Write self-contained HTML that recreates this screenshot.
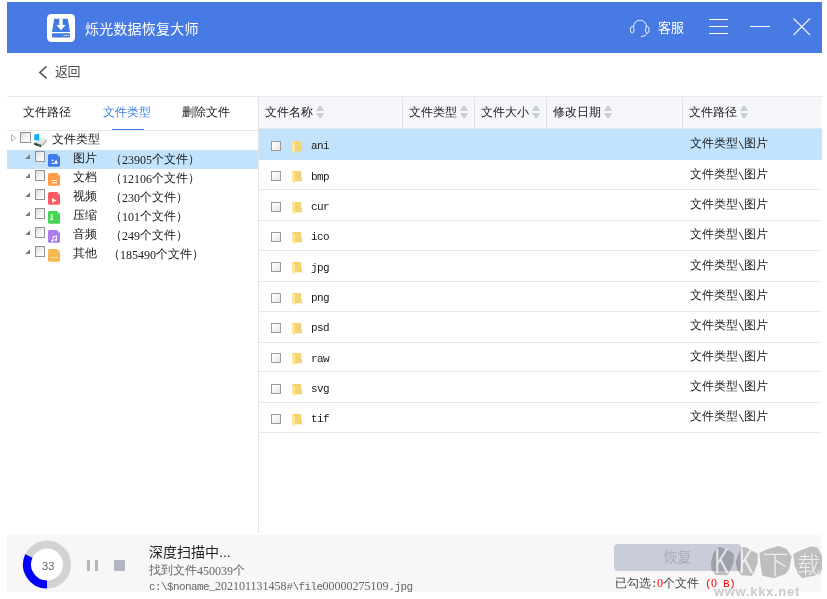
<!DOCTYPE html>
<html lang="zh-CN">
<head>
<meta charset="utf-8">
<title>烁光数据恢复大师</title>
<style>
html,body{margin:0;padding:0;background:#fff;}
body{width:827px;height:599px;position:relative;overflow:hidden;
  font-family:"Liberation Sans","Noto Sans CJK SC",sans-serif;font-size:12px;color:#222;}
.abs{position:absolute;}
.t,.yh{will-change:transform;}
.t{position:absolute;white-space:nowrap;line-height:14px;height:14px;font-size:12px;
  font-family:"Liberation Mono","WenQuanYi Zen Hei","Noto Sans CJK SC",sans-serif;color:#1a1a1a;}
.l{font-family:"Liberation Mono",monospace;font-size:11px;letter-spacing:-0.6px;position:relative;top:1px;}
.yh{font-family:"Liberation Sans","Noto Sans CJK SC",sans-serif;}
#titlebar{left:7px;top:2px;width:815px;height:51px;background:#477be3;}
.cb{position:absolute;width:9px;height:9px;border:1px solid #939393;background:linear-gradient(135deg,#dcdcdc 0%,#f6f6f6 60%,#ffffff 100%);}
.hline{position:absolute;height:1px;background:#e9e9e9;}
.vline{position:absolute;width:1px;background:#e4e4e4;}
.sort{position:absolute;width:9px;height:14px;}
.sort:before{content:"";position:absolute;left:0;top:0;border:4.5px solid transparent;border-top:0;border-bottom:6px solid #c9ccd2;}
.sort:after{content:"";position:absolute;left:0;top:8px;border:4.5px solid transparent;border-bottom:0;border-top:6px solid #c9ccd2;}
.rowsel{position:absolute;background:#c3e3fd;}
.d{font-family:"Liberation Serif",serif;font-size:12px;position:relative;top:1px;}
.l2{top:2px;}
.l0{top:0;}
.cb2{width:8px;height:8px;border-color:#9b9b9b;background:linear-gradient(135deg,#ffffff 0%,#f4f4f4 50%,#e6e6e6 100%);}
.cbc{width:8px;}
</style>
</head>
<body>

<!-- title bar -->
<div id="titlebar" class="abs"></div>
<svg class="abs" style="left:47px;top:14px" width="28" height="28" viewBox="0 0 28 28">
  <rect x="0" y="0" width="28" height="28" rx="4.5" fill="#fff"/>
  <path d="M7.2 4.8 H20.8 L23 18 H5 Z" fill="#3f7be0"/>
  <rect x="5" y="19.3" width="18" height="4.2" rx="0.8" fill="#3f7be0"/>
  <path d="M12.3 4.8 H15.7 V11 H18.6 L14 16.2 L9.4 11 H12.3 Z" fill="#fff"/>
  <rect x="16.6" y="21" width="1.2" height="1" fill="#fff"/>
  <rect x="18.6" y="21" width="1.2" height="1" fill="#fff"/>
  <rect x="20.6" y="21" width="1.2" height="1" fill="#fff"/>
</svg>
<div class="abs yh" style="left:85px;top:18px;font-size:14px;line-height:22px;color:#fff;font-weight:400;letter-spacing:0.2px;white-space:nowrap;">烁光数据恢复大师</div>

<!-- headset -->
<svg class="abs" style="left:628px;top:18px" width="24" height="22" viewBox="0 0 24 22" fill="none" stroke="#fff" stroke-opacity="0.9" stroke-width="1">
  <path d="M5.5 9 A6.5 6.8 0 0 1 18.5 9"/>
  <ellipse cx="4.2" cy="11.8" rx="1.8" ry="3.3"/>
  <ellipse cx="19.3" cy="11.8" rx="1.8" ry="3.3"/>
  <path d="M19.3 15.1 Q18 18.4 12.8 18.8"/>
</svg>
<div class="abs yh" style="left:658px;top:17px;font-size:13px;line-height:22px;color:#fff;white-space:nowrap;">客服</div>
<!-- menu -->
<div class="abs" style="left:709px;top:19px;width:19px;height:1px;background:#fff;"></div>
<div class="abs" style="left:709px;top:26px;width:19px;height:1px;background:#fff;"></div>
<div class="abs" style="left:709px;top:33px;width:19px;height:1px;background:#fff;"></div>
<!-- minimize -->
<div class="abs" style="left:750px;top:26px;width:20px;height:1px;background:#fff;"></div>
<!-- close -->
<svg class="abs" style="left:792px;top:17px" width="20" height="20" viewBox="0 0 20 20" stroke="#fff" stroke-opacity="0.92" stroke-width="1.1" fill="none">
  <path d="M1.5 1.5 L18 18 M18 1.5 L1.5 18"/>
</svg>

<!-- back -->
<svg class="abs" style="left:38px;top:65px" width="11" height="15" viewBox="0 0 11 15" fill="none" stroke="#555" stroke-width="1.5">
  <path d="M8.6 1.4 L1.8 7.4 L8.6 13.4"/>
</svg>
<div class="abs yh" style="left:55px;top:62px;font-size:13px;line-height:20px;color:#505050;white-space:nowrap;letter-spacing:-0.4px;">返回</div>

<div class="hline" style="left:7px;top:96px;width:815px;"></div>

<!-- left tabs -->
<div class="t" style="left:23px;top:106px;">文件路径</div>
<div class="t" style="left:103px;top:106px;color:#3f7fe8;">文件类型</div>
<div class="t" style="left:182px;top:106px;">删除文件</div>
<div class="hline" style="left:7px;top:130px;width:251px;"></div>
<div class="abs" style="left:112px;top:129px;width:32px;height:1px;background:#3f7fe8;"></div>

<!-- tree -->
<div id="tree">
<div class="rowsel" style="left:7px;top:150px;width:251px;height:19px;"></div>
<svg class="abs" style="left:11px;top:134px" width="6" height="8" viewBox="0 0 6 8"><path d="M0.5 0.8 L4.6 4 L0.5 7.2 Z" fill="#fff" stroke="#b4b4b4" stroke-width="1"/></svg>
<div class="cb" style="left:20px;top:132px;"></div>
<svg class="abs" style="left:33px;top:133px" width="15" height="15" viewBox="0 0 15 15">
  <path d="M1.2 9.6 L7.6 4.6 L14 6.2 L8.2 11.8 Z" fill="#e3e5e7"/>
  <path d="M1.2 9.6 L8.2 11.8 V14.2 L1.2 12 Z" fill="#3c3f42"/>
  <path d="M8.2 11.8 L14 6.2 V8.4 L8.2 14.2 Z" fill="#b7babd"/>
  <path d="M5.4 11.6 L7 12.1 V13 L5.4 12.5 Z" fill="#39c24a"/>
  <path d="M1.2 1.6 L6.2 0.8 V7.6 L1.2 7.2 Z" fill="#0ab4f2"/>
</svg>
<div class="t" style="left:52px;top:133px;">文件类型</div>
<svg class="abs" style="left:24px;top:154px" width="7" height="6" viewBox="0 0 7 6"><path d="M6 0.2 V5 H1.2 Z" fill="#7a7a7a"/></svg>
<div class="cb cbc" style="left:35px;top:151px;"></div>
<svg class="abs" style="left:48px;top:154px" width="12" height="13" viewBox="0 0 12 13"><path d="M1.6 0 H9.4 L12 2.6 V11.2 Q12 12.8 10.4 12.8 H1.6 Q0 12.8 0 11.2 V1.6 Q0 0 1.6 0 Z" fill="#4279e8"/><path d="M9.4 0 L12 2.6 H10.2 Q9.4 2.6 9.4 1.8 Z" fill="#fff" fill-opacity="0.55"/><g transform="translate(0,1)"><path d="M2.8 8.8 L5 7.4 L6.2 8 L8.2 4.6 L9.8 8.8 Z" fill="#fff"/><rect x="3.6" y="4.4" width="1.7" height="1.7" rx="0.6" fill="#fff"/></g></svg>
<div class="t" style="left:73px;top:152px;">图片</div>
<div class="t" style="left:110px;top:152px;">（<span class="d">23905</span>个文件）</div>
<svg class="abs" style="left:24px;top:173px" width="7" height="6" viewBox="0 0 7 6"><path d="M6 0.2 V5 H1.2 Z" fill="#7a7a7a"/></svg>
<div class="cb cbc" style="left:35px;top:170px;"></div>
<svg class="abs" style="left:48px;top:173px" width="12" height="13" viewBox="0 0 12 13"><path d="M1.6 0 H9.4 L12 2.6 V11.2 Q12 12.8 10.4 12.8 H1.6 Q0 12.8 0 11.2 V1.6 Q0 0 1.6 0 Z" fill="#ff9b40"/><path d="M9.4 0 L12 2.6 H10.2 Q9.4 2.6 9.4 1.8 Z" fill="#fff" fill-opacity="0.55"/><g transform="translate(0,1)"><rect x="3.6" y="6" width="5.4" height="1" fill="#fff"/><rect x="3.6" y="8.3" width="5.4" height="1" fill="#fff"/></g></svg>
<div class="t" style="left:73px;top:171px;">文档</div>
<div class="t" style="left:110px;top:171px;">（<span class="d">12106</span>个文件）</div>
<svg class="abs" style="left:24px;top:192px" width="7" height="6" viewBox="0 0 7 6"><path d="M6 0.2 V5 H1.2 Z" fill="#7a7a7a"/></svg>
<div class="cb cbc" style="left:35px;top:189px;"></div>
<svg class="abs" style="left:48px;top:192px" width="12" height="13" viewBox="0 0 12 13"><path d="M1.6 0 H9.4 L12 2.6 V11.2 Q12 12.8 10.4 12.8 H1.6 Q0 12.8 0 11.2 V1.6 Q0 0 1.6 0 Z" fill="#fb5c63"/><path d="M9.4 0 L12 2.6 H10.2 Q9.4 2.6 9.4 1.8 Z" fill="#fff" fill-opacity="0.55"/><g transform="translate(0,1)"><path d="M4 5 L8.4 7.4 L4 9.8 Z" fill="#fff"/></g></svg>
<div class="t" style="left:73px;top:190px;">视频</div>
<div class="t" style="left:110px;top:190px;">（<span class="d">230</span>个文件）</div>
<svg class="abs" style="left:24px;top:211px" width="7" height="6" viewBox="0 0 7 6"><path d="M6 0.2 V5 H1.2 Z" fill="#7a7a7a"/></svg>
<div class="cb cbc" style="left:35px;top:208px;"></div>
<svg class="abs" style="left:48px;top:211px" width="12" height="13" viewBox="0 0 12 13"><path d="M1.6 0 H9.4 L12 2.6 V11.2 Q12 12.8 10.4 12.8 H1.6 Q0 12.8 0 11.2 V1.6 Q0 0 1.6 0 Z" fill="#43d654"/><path d="M9.4 0 L12 2.6 H10.2 Q9.4 2.6 9.4 1.8 Z" fill="#fff" fill-opacity="0.55"/><g transform="translate(0,1)"><path d="M2.6 2.2 H4.8 V3.6 H2.6 Z M3 4.2 H5 V5.6 H3 Z M2.4 6.2 H4.8 V8.2 H2.4 Z" fill="#fff"/></g></svg>
<div class="t" style="left:73px;top:209px;">压缩</div>
<div class="t" style="left:110px;top:209px;">（<span class="d">101</span>个文件）</div>
<svg class="abs" style="left:24px;top:230px" width="7" height="6" viewBox="0 0 7 6"><path d="M6 0.2 V5 H1.2 Z" fill="#7a7a7a"/></svg>
<div class="cb cbc" style="left:35px;top:227px;"></div>
<svg class="abs" style="left:48px;top:230px" width="12" height="13" viewBox="0 0 12 13"><path d="M1.6 0 H9.4 L12 2.6 V11.2 Q12 12.8 10.4 12.8 H1.6 Q0 12.8 0 11.2 V1.6 Q0 0 1.6 0 Z" fill="#ac7bee"/><path d="M9.4 0 L12 2.6 H10.2 Q9.4 2.6 9.4 1.8 Z" fill="#fff" fill-opacity="0.55"/><g transform="translate(0,1)"><path d="M4.6 5.4 L9 4.4 V9 A1.1 1.1 0 1 1 8.1 7.9 V5.8 L5.5 6.4 V10 A1.1 1.1 0 1 1 4.6 8.9 Z" fill="#fff"/></g></svg>
<div class="t" style="left:73px;top:228px;">音频</div>
<div class="t" style="left:110px;top:228px;">（<span class="d">249</span>个文件）</div>
<svg class="abs" style="left:24px;top:249px" width="7" height="6" viewBox="0 0 7 6"><path d="M6 0.2 V5 H1.2 Z" fill="#7a7a7a"/></svg>
<div class="cb cbc" style="left:35px;top:246px;"></div>
<svg class="abs" style="left:48px;top:249px" width="12" height="13" viewBox="0 0 12 13"><path d="M1.6 0 H9.4 L12 2.6 V11.2 Q12 12.8 10.4 12.8 H1.6 Q0 12.8 0 11.2 V1.6 Q0 0 1.6 0 Z" fill="#f4ba50"/><path d="M9.4 0 L12 2.6 H10.2 Q9.4 2.6 9.4 1.8 Z" fill="#fff" fill-opacity="0.55"/><g transform="translate(0,1)"><rect x="3.4" y="7" width="1.4" height="1" fill="#fff" fill-opacity=".8"/><rect x="5.5" y="7" width="1.4" height="1" fill="#fff" fill-opacity=".8"/><rect x="7.6" y="7" width="1.4" height="1" fill="#fff" fill-opacity=".8"/></g></svg>
<div class="t" style="left:73px;top:247px;">其他</div>
<div class="t" style="left:108px;top:247px;">（<span class="d">185490</span>个文件）</div>
</div><!--/tree-->

<!-- right table -->
<div id="table">
<div class="vline" style="left:258px;top:97px;height:436px;"></div>
<div class="abs" style="left:259px;top:97px;width:563px;height:32px;background:#f5f7fa;"></div>
<div class="hline" style="left:259px;top:128px;width:563px;background:#e6e8ec;"></div>
<div class="vline" style="left:402px;top:97px;height:31px;background:#dfe1e6;"></div>
<div class="vline" style="left:474px;top:97px;height:31px;background:#dfe1e6;"></div>
<div class="vline" style="left:546px;top:97px;height:31px;background:#dfe1e6;"></div>
<div class="vline" style="left:682px;top:97px;height:31px;background:#dfe1e6;"></div>
<div class="t" style="left:265px;top:106px;">文件名称</div>
<div class="sort" style="left:316px;top:105px;"></div>
<div class="t" style="left:409px;top:106px;">文件类型</div>
<div class="sort" style="left:460px;top:105px;"></div>
<div class="t" style="left:481px;top:106px;">文件大小</div>
<div class="sort" style="left:532px;top:105px;"></div>
<div class="t" style="left:553px;top:106px;">修改日期</div>
<div class="sort" style="left:604px;top:105px;"></div>
<div class="t" style="left:689px;top:106px;">文件路径</div>
<div class="sort" style="left:740px;top:105px;"></div>
<div class="rowsel" style="left:259px;top:129px;width:563px;height:31px;"></div>
<div class="cb cb2" style="left:271px;top:141px;"></div>
<svg class="abs" style="left:291px;top:141px" width="12" height="13" viewBox="0 0 12 13"><rect x="1" y="0" width="9.2" height="10.3" fill="#f5d36f"/><rect x="10" y="6" width="1" height="4.3" fill="#f5d36f"/><path d="M1 0 L4 2 V12.4 L1 10.4 Z" fill="#fde79b"/></svg>
<div class="t" style="left:311px;top:137px;"><span class="l l2">ani</span></div>
<div class="t" style="left:690px;top:137px;">文件类型<span class="l l2">\</span>图片</div>
<div class="hline" style="left:259px;top:189px;width:563px;"></div>
<div class="cb cb2" style="left:271px;top:171px;"></div>
<svg class="abs" style="left:291px;top:171px" width="12" height="13" viewBox="0 0 12 13"><rect x="1" y="0" width="9.2" height="10.3" fill="#f5d36f"/><rect x="10" y="6" width="1" height="4.3" fill="#f5d36f"/><path d="M1 0 L4 2 V12.4 L1 10.4 Z" fill="#fde79b"/></svg>
<div class="t" style="left:311px;top:168px;"><span class="l l2">bmp</span></div>
<div class="t" style="left:690px;top:168px;">文件类型<span class="l l2">\</span>图片</div>
<div class="hline" style="left:259px;top:220px;width:563px;"></div>
<div class="cb cb2" style="left:271px;top:202px;"></div>
<svg class="abs" style="left:291px;top:202px" width="12" height="13" viewBox="0 0 12 13"><rect x="1" y="0" width="9.2" height="10.3" fill="#f5d36f"/><rect x="10" y="6" width="1" height="4.3" fill="#f5d36f"/><path d="M1 0 L4 2 V12.4 L1 10.4 Z" fill="#fde79b"/></svg>
<div class="t" style="left:311px;top:198px;"><span class="l l2">cur</span></div>
<div class="t" style="left:690px;top:198px;">文件类型<span class="l l2">\</span>图片</div>
<div class="hline" style="left:259px;top:250px;width:563px;"></div>
<div class="cb cb2" style="left:271px;top:232px;"></div>
<svg class="abs" style="left:291px;top:232px" width="12" height="13" viewBox="0 0 12 13"><rect x="1" y="0" width="9.2" height="10.3" fill="#f5d36f"/><rect x="10" y="6" width="1" height="4.3" fill="#f5d36f"/><path d="M1 0 L4 2 V12.4 L1 10.4 Z" fill="#fde79b"/></svg>
<div class="t" style="left:311px;top:228px;"><span class="l l2">ico</span></div>
<div class="t" style="left:690px;top:228px;">文件类型<span class="l l2">\</span>图片</div>
<div class="hline" style="left:259px;top:281px;width:563px;"></div>
<div class="cb cb2" style="left:271px;top:262px;"></div>
<svg class="abs" style="left:291px;top:262px" width="12" height="13" viewBox="0 0 12 13"><rect x="1" y="0" width="9.2" height="10.3" fill="#f5d36f"/><rect x="10" y="6" width="1" height="4.3" fill="#f5d36f"/><path d="M1 0 L4 2 V12.4 L1 10.4 Z" fill="#fde79b"/></svg>
<div class="t" style="left:311px;top:259px;"><span class="l l2">jpg</span></div>
<div class="t" style="left:690px;top:259px;">文件类型<span class="l l2">\</span>图片</div>
<div class="hline" style="left:259px;top:311px;width:563px;"></div>
<div class="cb cb2" style="left:271px;top:293px;"></div>
<svg class="abs" style="left:291px;top:293px" width="12" height="13" viewBox="0 0 12 13"><rect x="1" y="0" width="9.2" height="10.3" fill="#f5d36f"/><rect x="10" y="6" width="1" height="4.3" fill="#f5d36f"/><path d="M1 0 L4 2 V12.4 L1 10.4 Z" fill="#fde79b"/></svg>
<div class="t" style="left:311px;top:289px;"><span class="l l2">png</span></div>
<div class="t" style="left:690px;top:289px;">文件类型<span class="l l2">\</span>图片</div>
<div class="hline" style="left:259px;top:342px;width:563px;"></div>
<div class="cb cb2" style="left:271px;top:323px;"></div>
<svg class="abs" style="left:291px;top:323px" width="12" height="13" viewBox="0 0 12 13"><rect x="1" y="0" width="9.2" height="10.3" fill="#f5d36f"/><rect x="10" y="6" width="1" height="4.3" fill="#f5d36f"/><path d="M1 0 L4 2 V12.4 L1 10.4 Z" fill="#fde79b"/></svg>
<div class="t" style="left:311px;top:319px;"><span class="l l2">psd</span></div>
<div class="t" style="left:690px;top:319px;">文件类型<span class="l l2">\</span>图片</div>
<div class="hline" style="left:259px;top:371px;width:563px;"></div>
<div class="cb cb2" style="left:271px;top:353px;"></div>
<svg class="abs" style="left:291px;top:353px" width="12" height="13" viewBox="0 0 12 13"><rect x="1" y="0" width="9.2" height="10.3" fill="#f5d36f"/><rect x="10" y="6" width="1" height="4.3" fill="#f5d36f"/><path d="M1 0 L4 2 V12.4 L1 10.4 Z" fill="#fde79b"/></svg>
<div class="t" style="left:311px;top:350px;"><span class="l l2">raw</span></div>
<div class="t" style="left:690px;top:350px;">文件类型<span class="l l2">\</span>图片</div>
<div class="hline" style="left:259px;top:402px;width:563px;"></div>
<div class="cb cb2" style="left:271px;top:384px;"></div>
<svg class="abs" style="left:291px;top:384px" width="12" height="13" viewBox="0 0 12 13"><rect x="1" y="0" width="9.2" height="10.3" fill="#f5d36f"/><rect x="10" y="6" width="1" height="4.3" fill="#f5d36f"/><path d="M1 0 L4 2 V12.4 L1 10.4 Z" fill="#fde79b"/></svg>
<div class="t" style="left:311px;top:380px;"><span class="l l2">svg</span></div>
<div class="t" style="left:690px;top:380px;">文件类型<span class="l l2">\</span>图片</div>
<div class="hline" style="left:259px;top:432px;width:563px;"></div>
<div class="cb cb2" style="left:271px;top:414px;"></div>
<svg class="abs" style="left:291px;top:414px" width="12" height="13" viewBox="0 0 12 13"><rect x="1" y="0" width="9.2" height="10.3" fill="#f5d36f"/><rect x="10" y="6" width="1" height="4.3" fill="#f5d36f"/><path d="M1 0 L4 2 V12.4 L1 10.4 Z" fill="#fde79b"/></svg>
<div class="t" style="left:311px;top:410px;"><span class="l l2">tif</span></div>
<div class="t" style="left:690px;top:410px;">文件类型<span class="l l2">\</span>图片</div>
</div><!--/table-->

<!-- bottom bar -->
<div id="bottom">
<div class="abs" style="left:7px;top:535px;width:815px;height:57px;background:#f7f7f7;"></div>
<svg class="abs" style="left:22px;top:540px;will-change:transform" width="50" height="50" viewBox="0 0 50 50">
  <circle cx="25" cy="24.5" r="20" fill="#fff" stroke="#d3d3d3" stroke-width="8"/>
  <path d="M25 44.5 A20 20 0 0 1 6.87 16.05" fill="none" stroke="#0000ff" stroke-width="8"/>
  <text x="26.2" y="29.8" text-anchor="middle" font-family="Liberation Sans, sans-serif" font-size="11" fill="#666">33</text>
</svg>
<div class="abs" style="left:87px;top:560px;width:3px;height:11px;background:#b2b6c2;"></div>
<div class="abs" style="left:95px;top:560px;width:3px;height:11px;background:#b2b6c2;"></div>
<div class="abs" style="left:114px;top:560px;width:11px;height:11px;background:#b2b6c2;"></div>
<div class="abs yh" style="left:149px;top:541px;font-size:14px;line-height:22px;color:#222;white-space:nowrap;">深度扫描中...</div>
<div class="t" style="left:149px;top:563px;color:#666;">找到文件<span class="d">450039</span>个</div>
<div class="t" style="left:149px;top:578px;color:#666;"><span class="l">c:\$noname_</span><span class="d">202101131458</span><span class="l">#\file</span><span class="d">00000275109</span><span class="l">.jpg</span></div>
<div class="abs yh" style="left:614px;top:544px;width:127px;height:27px;border-radius:4px;background:#c8cdd9;color:#a8adb8;font-size:14px;line-height:27px;text-align:center;">恢复</div>
<div class="t" style="left:615px;top:576px;color:#444;">已勾选<span class="l l0">:</span><span class="d l0" style="color:#f00">0</span>个文件<span style="color:#f00"><span class="l l0"> (</span><span class="d l0">0</span><span class="l l0"> B)</span></span></div>
<svg class="abs" style="left:705px;top:540px;will-change:transform" width="117" height="45" viewBox="0 0 117 45">
  <g fill="#3c3c3c" fill-opacity="0.3" stroke="#3c3c3c" stroke-opacity="0.3" stroke-width="0" stroke-linejoin="round">
    <path d="M6 22.5 L8.2 13.5 L11.2 9 L15 7.1 L22.5 9.7 L28.9 13.9 L28.5 22.5 L25.5 30 L22.5 35.2 L10.5 34.9 L6.4 29.2 Z"/>
    <path d="M30.7 21.7 L33 15 L36.7 7.5 L40.5 7.1 L48 11.2 L52.5 13.5 L52.8 22.5 L49.5 31.5 L46.5 36 L36 35.2 L32.2 30 Z"/>
    <path d="M54.4 13 L61.3 9.6 L73.5 6.1 L81.3 8.7 L86.6 16.5 L84.4 28.7 L80.5 34 L68.7 38.3 L57.4 35.7 L55.7 26.1 Z"/>
    <path d="M88.3 13.9 L95.3 10.4 L105.7 6.5 L112.7 7.4 L117 16 L117 28.7 L114.4 34.8 L97 37.9 L92.6 33 L89.6 25.2 Z"/>
  </g>
  <g fill="#ffffff" fill-opacity="0.72" font-family="Liberation Sans, Noto Sans CJK SC, sans-serif" font-weight="300">
    <text transform="translate(9.5,33) scale(0.62,1)" font-size="35">K</text>
    <text transform="translate(34,33) scale(0.62,1)" font-size="35">K</text>
    <text x="57.5" y="33.5" font-size="26">下</text>
    <text x="92" y="32.5" font-size="23">载</text>
  </g>
</svg>
<div class="abs" style="left:714px;top:585px;font-family:'Liberation Sans',sans-serif;font-weight:bold;font-size:13px;line-height:14px;color:#cbcbcb;white-space:nowrap;letter-spacing:0.7px;will-change:transform;">www.kkx.net</div>
</div><!--/bottom-->

</body>
</html>
